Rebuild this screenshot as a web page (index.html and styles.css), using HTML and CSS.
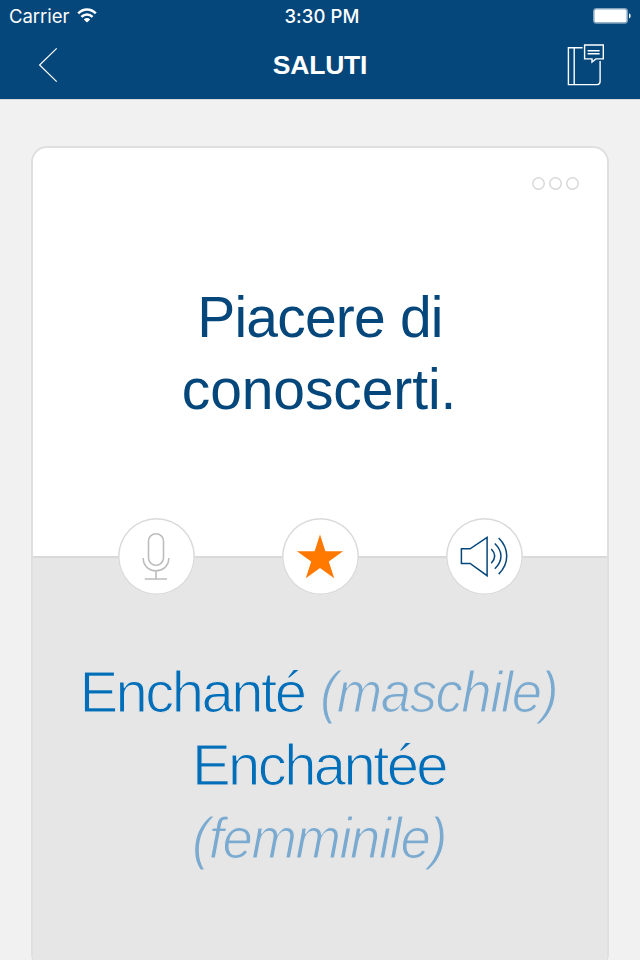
FILE: index.html
```html
<!DOCTYPE html>
<html lang="it">
<head>
<meta charset="utf-8">
<title>Saluti</title>
<link rel="stylesheet" href="styles.css">
</head>
<body>
<div class="screen">
  <header class="header">
    <div class="status">
      <div class="status-left">
        <span class="carrier">Carrier</span>
        <svg class="wifi" width="20" height="15" viewBox="0 0 20 15" fill="none" stroke="#fff" stroke-width="2.5">
          <path d="M1.2 5.4C6.2.2 13.8.2 18.8 5.4M4.4 8.9c3.3-3.3 7.9-3.3 11.2 0"/>
          <path d="M6.8 11.4c1.9-1.8 4.5-1.8 6.4 0L10 14.5z" fill="#fff" stroke="none"/>
        </svg>
      </div>
      <span class="clock">3:30 PM</span>
      <div class="status-right">
        <svg width="38" height="16" viewBox="0 0 38 16">
          <rect x=".6" y=".6" width="33.8" height="14.6" rx="2" fill="none" stroke="#91aec6" stroke-width="1"/>
          <rect x="1.3" y="1.3" width="32.4" height="13.2" rx="1.5" fill="#fff"/>
          <path d="M36 5.2q1.7.8 1.7 2.7T36 10.6z" fill="#fff"/>
        </svg>
      </div>
    </div>
    <nav class="nav">
      <svg class="back" width="22" height="36" viewBox="0 0 22 36" fill="none" stroke="#fff" stroke-width="1.2"><path d="M20.7 1.4L3.6 18l17.1 16.6"/></svg>
      <h1 class="title">SALUTI</h1>
      <svg class="book" width="38" height="44" viewBox="-.6 0 38 44" fill="none" stroke="#fff" stroke-width="1.4">
        <path d="M16 4.8H1.8v36.8h28.7q3-.2 3-3V18M7.6 4.8v36.8"/>
        <path d="M18 2h18.7v13.9h-7.4L25.4 19v-3.1H18z"/>
        <path d="M21 7.8h12M21 10.8h12"/>
      </svg>
    </nav>
  </header>
  <main class="card">
    <section class="question">
      <div class="dots"><i class="dot"></i><i class="dot"></i><i class="dot"></i></div>
      <p class="phrase"><span class="line l1">Piacere di</span><span class="line l2">conoscerti.</span></p>
    </section>
    <div class="actions">
      <button class="round" aria-label="Microfono">
        <svg width="73" height="73" viewBox=".5 0 73 73" fill="none" stroke="#bdbdbd" stroke-width="1.6">
          <rect x="29" y="13.7" width="15" height="31.6" rx="7.5"/>
          <path d="M23.7 38c0 17 25.6 17 25.6 0M36.5 50.7V59M25.3 59h22.2"/>
        </svg>
      </button>
      <button class="round" aria-label="Preferito">
        <svg width="73" height="73" viewBox=".5 0 73 73"><path fill="#ff7800" d="M36.5 14.4l5.4 16.8h17.7L45.3 41.5l5.4 16.8-14.2-10.3-14.2 10.3 5.4-16.8L13.4 31.2h17.7z"/></svg>
      </button>
      <button class="round" aria-label="Ascolta">
        <svg width="73" height="73" viewBox=".5 .2 73 73" fill="none" stroke="#05477b" stroke-width="1.5">
          <path d="M13.9 29h8.7l17-11.5v38.4l-17-12.3h-8.7z"/>
          <path d="M43.8 29.2q6.8 7 0 14.2M47.3 23.7c8.2 8 8.2 17.3 0 25.2M51.2 18.2c10.7 10.5 10.7 25.6 0 36.1"/>
        </svg>
      </button>
    </div>
    <section class="answer">
      <p class="translation"><span class="line a1">Enchanté <em>(maschile)</em></span><span class="line a2">Enchantée</span><span class="line a3"><em>(femminile)</em></span></p>
    </section>
  </main>
</div>
</body>
</html>
```
FILE: styles.css
```css
* { box-sizing: border-box; }
body { margin: 0; background: #f1f1f1; font-family: "Liberation Sans", Arial, sans-serif; }
.screen { width: 640px; height: 960px; overflow: hidden; background: #f1f1f1; }
.header { height: 99px; background: #05477b; color: #fff; box-shadow: 0 1px #d5d9dc; }
.status { height: 32px; display: grid; grid-template-columns: 1fr auto 1fr; align-items: center; padding: 0 9px 0 9px; font: 18.5px/32px Inter, sans-serif; }
.status-left { display: flex; align-items: center; gap: 8px; }
.carrier { letter-spacing: -.05px; }
.wifi { margin-top: -2px; }
.clock { font-weight: 500; letter-spacing: .1px; margin-left: 4px; }
.status-right { display: flex; justify-content: flex-end; margin-top: -1px; }
.nav { height: 66px; display: grid; grid-template-columns: 1fr auto 1fr; align-items: center; padding: 0 36px; }
.title { margin: 0; font: bold 26.5px/66px "Liberation Sans", Arial, sans-serif; letter-spacing: -.2px; }
.book { justify-self: end; }
.card { margin: 47px 31px 0; height: 824px; border: 2px solid #dfdfdf; border-radius: 16px; background: #fff; overflow: hidden; }
.question { height: 410px; border-bottom: 2px solid #d9d9d9; padding-top: 29px; }
.dots { display: flex; justify-content: flex-end; gap: 4px; padding-right: 28.5px; }
.dot { width: 13px; height: 13px; box-shadow: inset 0 0 0 1.5px #d8d8d8; border-radius: 50%; }
.phrase { margin: 91px 0 0; text-align: center; color: #05477b; font-size: 57px; line-height: 72px; }
.line { display: block; white-space: nowrap; }
.l1 { letter-spacing: -.8px; }
.l2 { letter-spacing: -.1px; margin-right: 2px; }
.actions { display: flex; justify-content: center; gap: 87px; height: 77px; margin: -40px 0 -37px; position: relative; }
.round { width: 77px; height: 77px; padding: 0; border: 0; box-shadow: inset 0 0 0 1.5px #dadada; border-radius: 50%; background: #fff; display: flex; align-items: center; justify-content: center; }
.answer { height: 412px; background: #e6e6e6; padding-top: 97px; }
.translation { margin: 0; text-align: center; color: #006eb8; font-size: 58px; line-height: 73px; letter-spacing: -1.5px; -webkit-text-stroke: 1.2px #e6e6e6; }
.translation em { display: inline-block; color: #7aaad0; transform: scaleX(.94); transform-origin: left; }
.a1 { letter-spacing: -2.5px; margin-left: -3px; }
.a1 em { letter-spacing: -1.5px; margin: 0 -15px 0 2px; }
.a2 { letter-spacing: -2.6px; margin-left: -2px; }
.a3 { margin-left: -2px; }
.a3 em { margin-right: -16px; }
```
